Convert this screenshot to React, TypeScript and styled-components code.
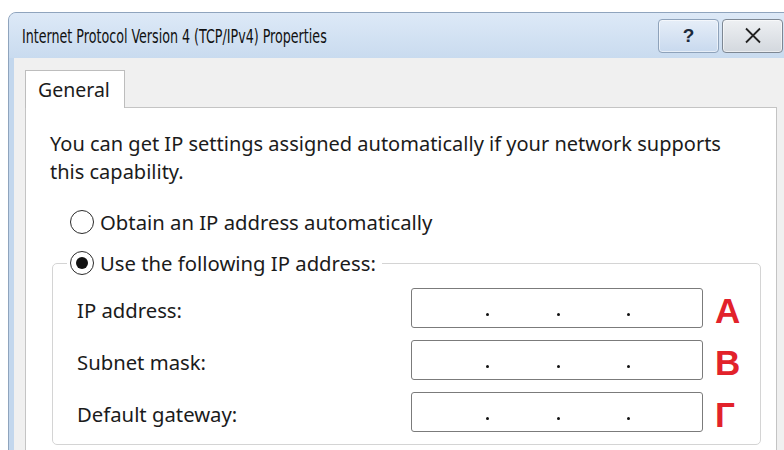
import React from "react";
import styled, { createGlobalStyle } from "styled-components";

const GlobalStyle = createGlobalStyle`
  html, body {
    margin: 0;
    padding: 0;
    background: #ffffff;
    overflow: hidden;
  }
  * { box-sizing: border-box; }
`;

const Page = styled.div`
  width: 784px;
  height: 450px;
  overflow: hidden;
  padding: 12px 0 0 8px;
  background: #ffffff;
  font-family: "Noto Sans", "Open Sans", sans-serif;
  color: #1b1b1b;
`;

const Window = styled.div`
  width: 820px;
  height: 470px;
  border: 1px solid #8fa4bd;
  border-radius: 8px 8px 0 0;
  background: #c3d7ed;
  display: flex;
  flex-direction: column;
`;

const TitleBar = styled.div`
  height: 45px;
  flex: none;
  display: flex;
  align-items: center;
  padding-left: 13px;
  border-radius: 7px 7px 0 0;
  background: linear-gradient(#dde9f7, #c9dbef);
`;

/* The caption font of this theme is a narrow face, so the run is squeezed horizontally */
const Title = styled.span`
  font-family: "DejaVu Sans Condensed", "Liberation Sans", sans-serif;
  font-stretch: condensed;
  font-size: 20px;
  color: #111;
  white-space: nowrap;
  display: inline-block;
  transform: scaleX(0.705);
  transform-origin: left center;
`;

const TitleButtons = styled.div`
  margin-left: auto;
  display: flex;
  gap: 3px;
  padding-right: 44px;
`;

const CaptionButton = styled.div<{ $close?: boolean }>`
  width: 61px;
  height: 34px;
  border: 1px solid ${(p) => (p.$close ? "#7d8793" : "#8ea2ba")};
  border-radius: 4px;
  display: flex;
  align-items: center;
  justify-content: center;
  background: ${(p) =>
    p.$close
      ? "linear-gradient(#eef0f3, #d3d8de)"
      : "linear-gradient(#e6eef8, #c8d9ee)"};
  box-shadow: inset 0 0 0 1px rgba(255, 255, 255, 0.55);
  font-family: "Liberation Sans", sans-serif;
  font-size: 19px;
  font-weight: bold;
  color: #1c2a3c;
`;

const Body = styled.div`
  flex: 1;
  margin-left: 5px;
  background: #f0f0f0;
  padding: 12px 0 0 11px;
  display: flex;
  flex-direction: column;
`;

const TabStrip = styled.div`
  display: flex;
  height: 37px;
  flex: none;
`;

const Tab = styled.div`
  width: 100px;
  height: 38px;
  background: #ffffff;
  border: 1px solid #bdbdbd;
  border-bottom: none;
  padding-left: 12px;
  display: flex;
  align-items: center;
  font-size: 19.5px;
  position: relative;
  z-index: 1;
`;

const Panel = styled.div`
  width: 752px;
  flex: 1;
  background: #ffffff;
  border: 1px solid #c4c4c4;
  padding: 22px 0 0 24px;
`;

const Description = styled.p`
  margin: 0;
  width: 700px;
  font-size: 20px;
  line-height: 28px;
`;

const RadioRow = styled.label`
  display: flex;
  align-items: center;
  gap: 6px;
  font-size: 20.3px;
  height: 28px;
  white-space: nowrap;
`;

const RadioCircle = styled.span<{ $checked?: boolean }>`
  width: 24px;
  height: 24px;
  border-radius: 50%;
  border: 1.8px solid #2b2b2b;
  background: #ffffff;
  display: flex;
  align-items: center;
  justify-content: center;
  flex: none;
  &::after {
    content: "";
    width: 12px;
    height: 12px;
    border-radius: 50%;
    background: #111;
    display: ${(p) => (p.$checked ? "block" : "none")};
  }
`;

const AutoOption = styled.div`
  margin: 22px 0 0 20px;
`;

const GroupBox = styled.fieldset`
  margin: 13px 0 0 2px;
  padding: 0;
  width: 709px;
  height: 196px;
  border: 1px solid #d4d4d4;
  border-radius: 5px;
`;

const Legend = styled.legend`
  margin-left: 14px;
  padding: 0 6px 0 3px;
`;

const FieldGrid = styled.div`
  display: grid;
  grid-template-columns: 322px 292px auto;
  grid-auto-rows: 40px;
  column-gap: 12px;
  row-gap: 12px;
  padding: 11px 0 0 24px;
  align-items: center;
`;

const FieldLabel = styled.span`
  font-size: 20.3px;
  padding-top: 4px;
`;

const AddressBox = styled.div`
  height: 40px;
  border: 1.5px solid #7b7b7b;
  border-radius: 3px;
  background: #fff;
  display: flex;
  align-items: center;
  padding: 0 4px 0 6px;
`;

const Octet = styled.span`
  flex: 1;
`;

const Dot = styled.span`
  width: 3px;
  height: 3px;
  border-radius: 50%;
  background: #111;
  margin-top: 13px;
`;

const Marker = styled.span`
  font-family: "Liberation Sans", "DejaVu Sans", sans-serif;
  font-weight: bold;
  font-size: 35px;
  color: #e2222b;
  line-height: 1;
  padding-top: 5px;
`;

const fields = [
  { label: "IP address:", mark: "А" },
  { label: "Subnet mask:", mark: "В" },
  { label: "Default gateway:", mark: "Г" },
];

function AddressInput() {
  return (
    <AddressBox>
      <Octet />
      <Dot />
      <Octet />
      <Dot />
      <Octet />
      <Dot />
      <Octet />
    </AddressBox>
  );
}

export default function App() {
  return (
    <>
      <GlobalStyle />
      <Page>
        <Window>
          <TitleBar>
            <Title>Internet Protocol Version 4 (TCP/IPv4) Properties</Title>
            <TitleButtons>
              <CaptionButton>?</CaptionButton>
              <CaptionButton $close>
                <svg width="18" height="17" viewBox="0 0 18 17">
                  <path d="M2 1.5 L16 15.5 M16 1.5 L2 15.5" stroke="#222" strokeWidth="1.8" fill="none" />
                </svg>
              </CaptionButton>
            </TitleButtons>
          </TitleBar>
          <Body>
            <TabStrip>
              <Tab>General</Tab>
            </TabStrip>
            <Panel>
              <Description>
                You can get IP settings assigned automatically if your network supports this capability.
              </Description>
              <AutoOption>
                <RadioRow>
                  <RadioCircle />
                  Obtain an IP address automatically
                </RadioRow>
              </AutoOption>
              <GroupBox>
                <Legend>
                  <RadioRow>
                    <RadioCircle $checked />
                    Use the following IP address:
                  </RadioRow>
                </Legend>
                <FieldGrid>
                  {fields.map((f) => (
                    <React.Fragment key={f.label}>
                      <FieldLabel>{f.label}</FieldLabel>
                      <AddressInput />
                      <Marker>{f.mark}</Marker>
                    </React.Fragment>
                  ))}
                </FieldGrid>
              </GroupBox>
            </Panel>
          </Body>
        </Window>
      </Page>
    </>
  );
}
